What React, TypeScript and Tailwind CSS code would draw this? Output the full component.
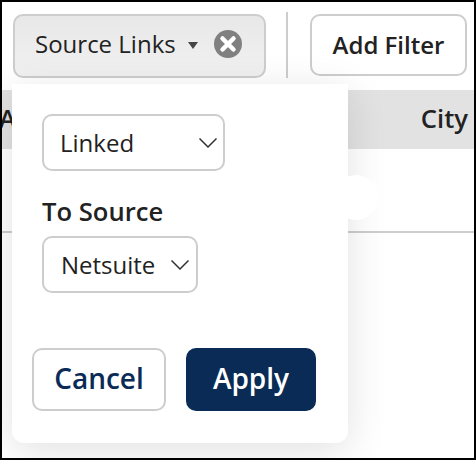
const font = { fontFamily: '"Open Sans", sans-serif' };

function Chevron() {
  return (
    <svg viewBox="0 0 18 10" className="h-[10px] w-[18px]" fill="none">
      <path d="M0.5 0.5L9 9L17.5 0.5" stroke="#333" strokeWidth="1.5" />
    </svg>
  );
}

function FakeSelect({ label, className }: { label: string; className: string }) {
  return (
    <div className={`flex h-[57px] items-center justify-between rounded-[10px] border-2 border-[#cdcdcd] bg-white text-[24px] text-[#222] ${className}`}>
      <span>{label}</span>
      <Chevron />
    </div>
  );
}

function FilterPopover() {
  return (
    <div className="absolute left-[10px] top-[82px] flex h-[359px] w-[336px] flex-col rounded-b-[12px] bg-white px-[20px] pt-[30px] shadow-[0_8px_40px_rgba(0,0,0,0.12)]">
      <div className="pl-[10px]">
        <FakeSelect label="Linked" className="w-[183px] pl-[16px] pr-[6px]" />
        <div className="mb-[6px] mt-[23px] text-[25.6px] font-semibold leading-[36px] text-[#222]">To Source</div>
        <FakeSelect label="Netsuite" className="w-[156px] pl-[17px] pr-[7px]" />
      </div>
      <div className="mt-[55px] flex gap-[20px]">
        <button className="h-[63px] w-[134px] rounded-[10px] border-2 border-[#cdcdcd] bg-white pb-[3px] text-[28px] font-semibold text-[#0a2b55]">Cancel</button>
        <button className="h-[63px] w-[130px] rounded-[10px] bg-[#0a2b55] pb-[3px] text-[28px] font-semibold text-white">Apply</button>
      </div>
    </div>
  );
}

export default function App() {
  return (
    <div style={font} className="relative h-[460px] w-[476px] overflow-hidden border-2 border-black bg-white">
      <div className="flex items-start pl-[11px] pt-[12px]">
        <div className="flex h-[64px] w-[253px] items-center rounded-[10px] border-2 border-[#cdcdcd] bg-linear-to-b from-[#e8e8e8] to-[#f1f1f1] pl-[20px] text-[24px] text-[#222]">
          <span className="pb-[4px]">Source Links</span>
          <span className="mb-[2px] ml-[12px] h-0 w-0 border-x-[5px] border-t-[7px] border-x-transparent border-t-[#444]" />
          <svg viewBox="0 0 28 28" className="mb-[4px] ml-[16px] h-[28px] w-[28px]">
            <circle cx="14" cy="14" r="14" fill="#808080" />
            <path d="M8.5 8.5l11 11M19.5 8.5l-11 11" stroke="#fff" strokeWidth="4.5" strokeLinecap="round" />
          </svg>
        </div>
        <div className="-mt-[2px] ml-[20px] h-[66px] w-[2px] bg-[#cdcdcd]" />
        <button className="ml-[22px] h-[62px] w-[157px] rounded-[10px] border-2 border-[#cdcdcd] bg-white text-[24px] font-semibold text-[#222]">Add Filter</button>
      </div>
      <div className="mt-[12px] flex h-[59px] items-center justify-between bg-[#e2e2e2] pb-[1px] pr-[6px] text-[25.6px] font-semibold text-[#222]">
        <span className="-ml-[3px]">Ad</span>
        <span>City</span>
      </div>
      <div className="h-[84px] border-b-2 border-[#cdcdcd] bg-white" />
      <FilterPopover />
      <div className="absolute left-[332px] top-[173px] h-[45px] w-[44px] rounded-full bg-white" />
    </div>
  );
}
